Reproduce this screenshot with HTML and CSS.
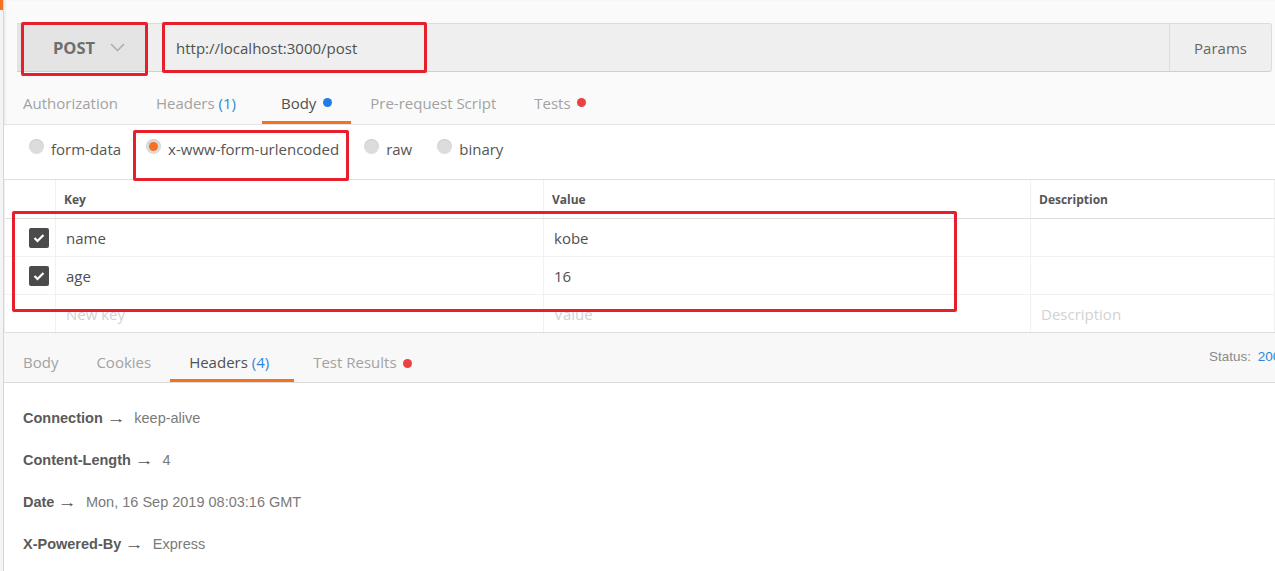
FILE: index.html
```html
<!DOCTYPE html>
<html lang="en">
<head>
<meta charset="utf-8">
<title>Postman request</title>
<link rel="stylesheet" href="styles.css">
</head>
<body>
<div class="app">
  <div class="edge"></div>
  <div class="main">
    <div class="urlbar">
      <div class="method">
        <span class="method-name">POST</span>
        <svg class="chev" width="15" height="9" viewBox="0 0 15 9"><polyline points="1,1 7.5,7.5 14,1" fill="none" stroke="#b0b0b0" stroke-width="1.6"/></svg>
      </div>
      <div class="url">http://localhost:3000/post</div>
      <div class="params">Params</div>
    </div>

    <div class="req-tabs">
      <div class="tab">Authorization</div>
      <div class="tab">Headers <span class="count">(1)</span></div>
      <div class="tab active">Body <span class="dot blue"></span></div>
      <div class="tab">Pre-request Script</div>
      <div class="tab">Tests <span class="dot red"></span></div>
    </div>

    <div class="radios">
      <div class="radio"><span class="circle"></span><span class="rlabel">form-data</span></div>
      <div class="radio"><span class="circle on"></span><span class="rlabel">x-www-form-urlencoded</span></div>
      <div class="radio"><span class="circle"></span><span class="rlabel">raw</span></div>
      <div class="radio"><span class="circle"></span><span class="rlabel">binary</span></div>
    </div>

    <div class="kv">
      <div class="kv-row head">
        <div class="c c0"></div>
        <div class="c">Key</div>
        <div class="c">Value</div>
        <div class="c">Description</div>
      </div>
      <div class="kv-row">
        <div class="c c0"><span class="check"><svg width="12" height="10" viewBox="0 0 12 10"><polyline points="1.5,5 4.5,8 10.5,2" fill="none" stroke="#fff" stroke-width="2.2"/></svg></span></div>
        <div class="c cell">name</div>
        <div class="c cell">kobe</div>
        <div class="c cell"></div>
      </div>
      <div class="kv-row">
        <div class="c c0"><span class="check"><svg width="12" height="10" viewBox="0 0 12 10"><polyline points="1.5,5 4.5,8 10.5,2" fill="none" stroke="#fff" stroke-width="2.2"/></svg></span></div>
        <div class="c cell">age</div>
        <div class="c cell">16</div>
        <div class="c cell"></div>
      </div>
      <div class="kv-row last">
        <div class="c c0"></div>
        <div class="c cell ph">New key</div>
        <div class="c cell ph">Value</div>
        <div class="c cell ph">Description</div>
      </div>
    </div>

    <div class="res-bar">
      <div class="rtabs">
        <div class="rtab">Body</div>
        <div class="rtab">Cookies</div>
        <div class="rtab active">Headers <span class="count">(4)</span></div>
        <div class="rtab">Test Results <span class="dot red"></span></div>
      </div>
      <div class="status">Status: <span class="code">200 OK</span></div>
    </div>

    <div class="headers">
      <div class="hrow"><b>Connection</b> <span class="arrow">→</span><span class="val">keep-alive</span></div>
      <div class="hrow"><b>Content-Length</b> <span class="arrow">→</span><span class="val">4</span></div>
      <div class="hrow"><b>Date</b> <span class="arrow">→</span><span class="val">Mon, 16 Sep 2019 08:03:16 GMT</span></div>
      <div class="hrow"><b>X-Powered-By</b> <span class="arrow">→</span><span class="val">Express</span></div>
    </div>
  </div>
</div>

<div class="mark m1"></div>
<div class="mark m2"></div>
<div class="mark m3"></div>
<div class="mark m4"></div>
</body>
</html>
```
FILE: styles.css
```css
html, body {
  margin: 0;
  padding: 0;
  width: 1275px;
  height: 571px;
  overflow: hidden;
  background: #fafafa;
  font-family: "Open Sans", "Liberation Sans", sans-serif;
  color: #505050;
}

.app {
  display: flex;
  height: 571px;
}

.edge {
  width: 3px;
  flex: none;
  background: linear-gradient(#f47023 0 10px, #f4f4f4 10px);
  border-right: 1px solid #d6d6d6;
}

.main {
  flex: 1;
  min-width: 0;
  display: flex;
  flex-direction: column;
  box-shadow: inset 2px 0 2px rgba(0,0,0,0.05);
}

/* URL bar */
.urlbar {
  display: flex;
  height: 47px;
  margin: 23px 3px 0 13px;
  border-top: 1px solid #dcdcdc;
  border-bottom: 1px solid #cfcfcf;
  border-right: 1px solid #dcdcdc;
  border-radius: 0 3px 3px 0;
  background: #efefef;
}

.method {
  width: 130px;
  flex: none;
  display: flex;
  align-items: center;
  background: #e4e4e4;
  padding-left: 36px;
  box-sizing: border-box;
}

.method-name {
  font-weight: 700;
  font-size: 16.5px;
  color: #6e6e6e;
}

.chev {
  margin-left: 15px;
}

.url {
  flex: 1;
  display: flex;
  align-items: center;
  padding-left: 29px;
  font-size: 15px;
  color: #4f4f4f;
}

.params {
  width: 101px;
  flex: none;
  display: flex;
  align-items: center;
  justify-content: center;
  border-left: 1px solid #dcdcdc;
  font-size: 15px;
  color: #666;
}

/* request tabs */
.req-tabs {
  display: flex;
  margin-top: 12px;
  border-bottom: 1px solid #e2e2e2;
}

.tab {
  height: 37px;
  padding: 0 19px;
  display: flex;
  align-items: center;
  font-size: 15px;
  color: #a2a2a2;
  border-bottom: 3px solid transparent;
  white-space: pre;
}

.tab.active {
  margin-left: 7px;
  color: #505050;
  border-bottom-color: #f47023;
}

.count {
  color: #2f86d8;
}

.dot {
  display: inline-block;
  width: 9px;
  height: 9px;
  border-radius: 50%;
  margin-left: 3px;
}
.dot.blue { background: #1d7fe6; }
.dot.red { background: #ec4141; }

/* radios */
.radios {
  display: flex;
  gap: 25px;
  height: 55px;
  box-sizing: border-box;
  padding: 13px 0 0 25px;
  background: #fff;
  border-bottom: 1px solid #dedede;
}

.radio {
  display: flex;
  align-items: flex-start;
}

.circle {
  width: 15px;
  height: 15px;
  margin-top: 1px;
  border-radius: 50%;
  background: #dcdcdc;
  box-shadow: inset 0 1px 1px rgba(0,0,0,0.08);
  display: flex;
  align-items: center;
  justify-content: center;
}

.circle.on::after {
  content: "";
  width: 9px;
  height: 9px;
  border-radius: 50%;
  background: #f47023;
}

.rlabel {
  margin-left: 7px;
  font-size: 15px;
  line-height: 22px;
  color: #555;
}

/* key value table */
.kv {
  background: #fff;
  margin-left: 1px;
}

.kv-row {
  display: grid;
  grid-template-columns: 51px 488px 487px 1fr;
  height: 38px;
  border-bottom: 1px solid #f1f1f1;
  box-sizing: border-box;
}

.kv-row.head {
  height: 39px;
  border-bottom: 1px solid #dedede;
}

.kv-row.last {
  border-bottom: 1px solid #dcdcdc;
}

.c {
  border-right: 1px solid #f1f1f1;
  display: flex;
  align-items: center;
  padding-left: 8px;
}

.head .c {
  font-size: 12px;
  font-weight: 700;
  color: #555;
}

.c0 {
  padding-left: 24px;
}

.cell {
  padding-left: 10px;
  font-size: 15px;
  color: #505050;
}

.cell.ph {
  color: #d2d2d2;
}

.check {
  width: 20px;
  height: 20px;
  border-radius: 2px;
  background: #4b4b4b;
  display: flex;
  align-items: center;
  justify-content: center;
}

/* response bar */
.res-bar {
  display: flex;
  height: 50px;
  box-sizing: border-box;
  background: #f8f8f8;
  border-bottom: 1px solid #dcdcdc;
}

.rtabs {
  display: flex;
}

.rtab {
  padding: 18px 19px 6px;
  line-height: 22px;
  font-size: 15px;
  color: #a2a2a2;
  border-bottom: 3px solid transparent;
  white-space: pre;
}

.rtab.active {
  padding-right: 25px;
  color: #505050;
  border-bottom-color: #f47023;
}

.status {
  margin-left: auto;
  width: 66px;
  flex: none;
  padding-top: 15px;
  line-height: 18px;
  white-space: nowrap;
  font-family: "Liberation Sans", Arial, sans-serif;
  font-size: 13.5px;
  color: #8a8a8a;
}

.code {
  color: #2f86d8;
  margin-left: 3px;
}

/* headers list */
.headers {
  flex: 1;
  background: #fff;
  padding: 14px 0 0 19px;
  font-family: "Liberation Sans", Arial, sans-serif;
  font-size: 14.5px;
}

.hrow {
  height: 42px;
  line-height: 42px;
  color: #555;
}

.hrow b {
  color: #5a5a5a;
}

.arrow {
  display: inline-block;
  color: #555;
  transform: scaleX(1.3);
  margin: 0 11px 0 2px;
}

.val {
  color: #7a7a7a;
}

/* red annotation boxes drawn over the screenshot */
.mark {
  position: absolute;
  border: 3px solid #e51f2b;
  border-radius: 2px;
  box-sizing: border-box;
}
.m1 { left: 21px; top: 22px; width: 127px; height: 54px; }
.m2 { left: 162px; top: 22px; width: 265px; height: 51px; }
.m3 { left: 133px; top: 130px; width: 216px; height: 51px; }
.m4 { left: 12px; top: 211px; width: 945px; height: 101px; }
```
